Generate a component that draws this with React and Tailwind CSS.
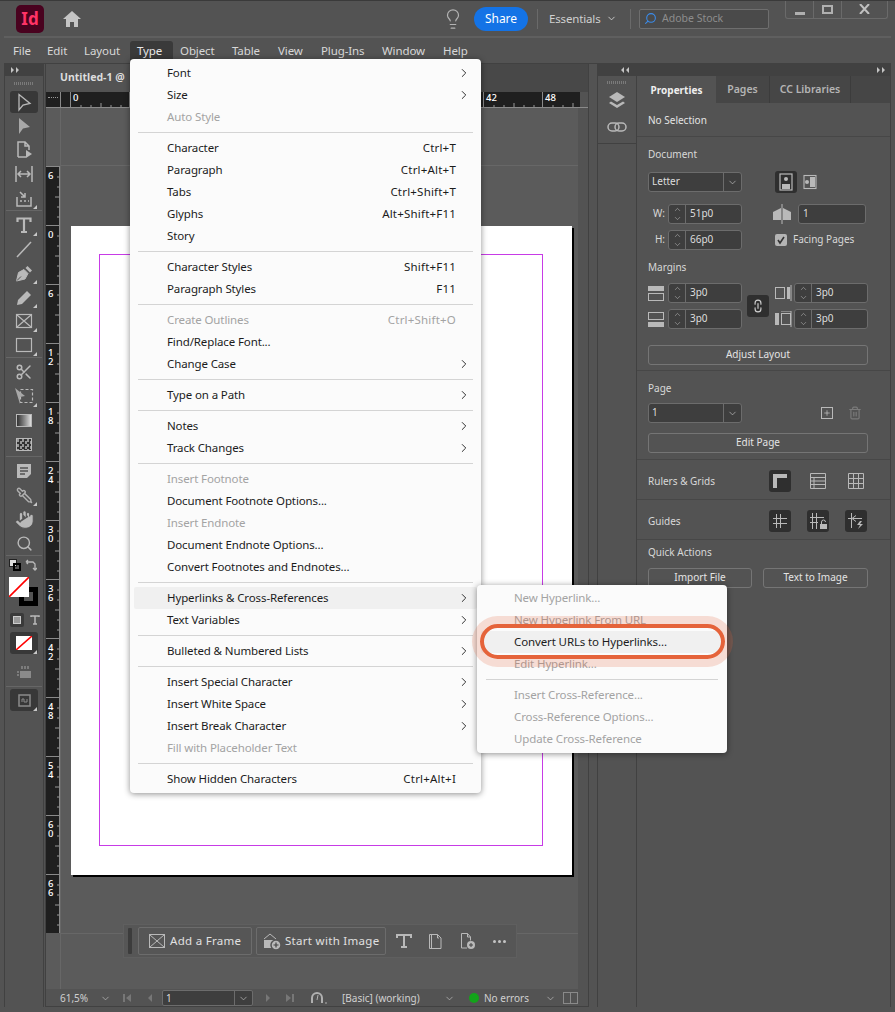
import { ChevronDown, ChevronRight, ChevronUp, Scissors, Pipette, Hand, Search, Lightbulb, Plus, Trash2, Link2 } from 'lucide-react';

const typeMenu = [
  [{ t: 'Font', a: 1 }, { t: 'Size', a: 1 }, { t: 'Auto Style', d: 1 }],
  [{ t: 'Character', s: 'Ctrl+T' }, { t: 'Paragraph', s: 'Ctrl+Alt+T' }, { t: 'Tabs', s: 'Ctrl+Shift+T' }, { t: 'Glyphs', s: 'Alt+Shift+F11' }, { t: 'Story' }],
  [{ t: 'Character Styles', s: 'Shift+F11' }, { t: 'Paragraph Styles', s: 'F11' }],
  [{ t: 'Create Outlines', s: 'Ctrl+Shift+O', d: 1 }, { t: 'Find/Replace Font...' }, { t: 'Change Case', a: 1 }],
  [{ t: 'Type on a Path', a: 1 }],
  [{ t: 'Notes', a: 1 }, { t: 'Track Changes', a: 1 }],
  [{ t: 'Insert Footnote', d: 1 }, { t: 'Document Footnote Options...' }, { t: 'Insert Endnote', d: 1 }, { t: 'Document Endnote Options...' }, { t: 'Convert Footnotes and Endnotes...' }],
  [{ t: 'Hyperlinks & Cross-References', a: 1, h: 1 }, { t: 'Text Variables', a: 1 }],
  [{ t: 'Bulleted & Numbered Lists', a: 1 }],
  [{ t: 'Insert Special Character', a: 1 }, { t: 'Insert White Space', a: 1 }, { t: 'Insert Break Character', a: 1 }, { t: 'Fill with Placeholder Text', d: 1 }],
  [{ t: 'Show Hidden Characters', s: 'Ctrl+Alt+I' }],
];

const linkMenu = [
  [{ t: 'New Hyperlink...', d: 1 }, { t: 'New Hyperlink From URL', d: 1 }, { t: 'Convert URLs to Hyperlinks...', h: 1 }, { t: 'Edit Hyperlink...', d: 1 }],
  [{ t: 'Insert Cross-Reference...', d: 1 }, { t: 'Cross-Reference Options...', d: 1 }, { t: 'Update Cross-Reference', d: 1 }],
];

const menuBar = [
  ['File', 'w-[34px]'], ['Edit', 'w-[37px]'], ['Layout', 'w-[53px]'], ['Type', 'w-[43px]'], ['Object', 'w-[52px]'],
  ['Table', 'w-[46px]'], ['View', 'w-[43px]'], ['Plug-Ins', 'w-[61px]'], ['Window', 'w-[61px]'], ['Help', 'w-[40px]'],
];

const rulerLabels = ['6', '0', '6', '12', '18', '24', '30', '36', '42', '48', '54', '60', '66'];
const topLabels = ['0', '6', '12', '18', '24', '30', '36', '42', '48'];

function MenuRow({ item }) {
  return (
    <div className={`mx-[4px] h-[22px] pl-[33px] flex items-center justify-between rounded-[2px] ${item.a ? 'pr-[6px]' : 'pr-[21px]'} ${item.h ? 'bg-[#f0f0f0]' : ''} ${item.d ? 'text-[#a3a3a3]' : 'text-[#1c1c1c]'}`}>
      <span>{item.t}</span>
      {item.s && <span className="tracking-[0.2px]">{item.s}</span>}
      {item.a && <ChevronRight size={14} strokeWidth={1.6} className="text-[#222]" />}
    </div>
  );
}

function Tick({ vertical }) {
  return vertical ? (
    <svg width="5" height="58" className="ml-auto">
      <path d="M3 10h2M3 20h2M1 30h4M3 40h2M3 50h2" stroke="#9a9a9a" />
    </svg>
  ) : (
    <svg width="58" height="5" className="absolute bottom-0 left-0">
      <path d="M10 3v2M20 3v2M30 1v4M40 3v2M50 3v2" stroke="#9a9a9a" />
    </svg>
  );
}

function Tool({ children, active, corner, h = 'h-[24px]' }) {
  return (
    <div className={`${h} flex items-center justify-center`}>
      <div className={`relative w-[28px] h-[22px] flex items-center justify-center rounded-[3px] ${active ? 'bg-[#383838]' : ''}`}>
        {children}
        {corner && <span className="absolute right-[1px] bottom-[0px] w-0 h-0 border-l-[4px] border-l-transparent border-b-[4px] border-b-[#c8c8c8]" />}
      </div>
    </div>
  );
}

function Ic({ children, w = 20, h = 20, vb }) {
  return (
    <svg width={w} height={h} viewBox={vb || `0 0 ${w} ${h}`} fill="none" stroke="#b9b9b9" strokeWidth="1.5">
      {children}
    </svg>
  );
}

function Sep() {
  return <div className="h-px bg-[#666] mx-[1px]" />;
}

function Toolbar() {
  return (
    <div className="w-[40px] border-x border-[#414141] flex flex-col shrink-0">
      <div className="h-[12px] bg-[#414141] text-[#c4c4c4] flex items-center pl-[5px]">
        <svg width="10" height="6"><path d="M1 0l3 3-3 3zM6 0l3 3-3 3z" fill="#c4c4c4" /></svg>
      </div>
      <div className="h-[14px] flex items-center justify-center">
        <div className="w-[20px] h-[3px] bg-[repeating-linear-gradient(90deg,#7a7a7a_0_1px,transparent_1px_2px)]" />
      </div>
      <Tool active><Ic vb="0 0 20 20"><path d="M5 2.500l11 9-7 1.500-4 5z" strokeWidth="1.3" /></Ic></Tool>
      <Tool><Ic><path d="M5 2l11 9-7 1.500-4 5.500z" fill="#a8a8a8" stroke="none" /></Ic></Tool>
      <Tool><Ic><path d="M4 17V2h7l4 4v4M4 17h8M11 2v4h4" /><path d="M12 10l6 4-6 4z" fill="#b9b9b9" stroke="none" /></Ic></Tool>
      <Tool><Ic w={22}><path d="M3 2v16M19 2v16" /><path d="M6 10h10M8 7l-3 3 3 3M14 7l3 3-3 3" /></Ic></Tool>
      <Tool corner><Ic><path d="M3 9v9h14V9" /><path d="M6 4l5 5M11 5v4H7" /><path d="M6 13h2M10 13h2M14 13h1" /></Ic></Tool>
      <div className="h-[3px]"><Sep /></div>
      <Tool corner><Ic><path d="M3.500 7V3.500h13V7M10 3.500V17M7 17h6" strokeWidth="2.200" /></Ic></Tool>
      <Tool><Ic><path d="M3 18L17 3" /></Ic></Tool>
      <Tool corner><Ic><path d="M2.500 18l2-8.500L10 6.500l4 4-3 5.500z" fill="#b9b9b9" stroke="#b9b9b9" strokeWidth="1" /><path d="M11.500 5l2-2 4.500 4.500-2 2z" fill="#b9b9b9" stroke="none" /><path d="M3 17.500l4-4" stroke="#535353" strokeWidth="1" /></Ic></Tool>
      <Tool corner><Ic><path d="M3 18l1-5L13 4l4 4-9 9z" fill="#b9b9b9" stroke="none" /></Ic></Tool>
      <Tool corner><Ic><rect x="2.500" y="3.500" width="15" height="13" strokeWidth="1.200" /><path d="M3 4l14 12M17 4L3 16" strokeWidth="1.200" /></Ic></Tool>
      <Tool corner><Ic><rect x="2.500" y="3.500" width="15" height="13" strokeWidth="1.200" /></Ic></Tool>
      <div className="h-[3px]"><Sep /></div>
      <Tool><Scissors size={18} stroke="#b9b9b9" /></Tool>
      <Tool corner><Ic><rect x="6.500" y="3.500" width="12" height="13" strokeDasharray="3 2" strokeWidth="1.200" /><path d="M1 2l10 8-5 1 0 7z" fill="#a8a8a8" stroke="none" /></Ic></Tool>
      <Tool><div className="w-[16px] h-[13px] border border-[#b9b9b9] bg-gradient-to-r from-[#333] to-[#ddd]" /></Tool>
      <Tool><div className="w-[16px] h-[13px] border border-[#b9b9b9] bg-[conic-gradient(#333_25%,#999_0_50%,#333_0_75%,#999_0)] bg-[length:5px_5px]" /></Tool>
      <div className="h-[3px]"><Sep /></div>
      <Tool><Ic><path d="M3 3h14v10l-4 4H3z" fill="#b9b9b9" stroke="none" /><path d="M6 7h8M6 10h8M6 13h5" stroke="#535353" /></Ic></Tool>
      <Tool corner><Pipette size={17} stroke="#b0b0b0" className="-scale-x-100" /></Tool>
      <Tool><Hand size={21} fill="#b9b9b9" stroke="#535353" strokeWidth={1.2} /></Tool>
      <Tool><Search size={17} stroke="#b9b9b9" /></Tool>
      <div className="h-[3px]"><Sep /></div>
      <div className="h-[14px] flex items-center pl-[4px] gap-[4px]">
        <div className="relative w-[12px] h-[12px]">
          <div className="w-[8px] h-[8px] bg-[#ddd] border border-[#222]" />
          <div className="absolute right-0 bottom-0 w-[8px] h-[8px] border-2 border-black" />
        </div>
        <Ic w={12} h={12}><path d="M2 3h6l2 2v5M1 3l2-2M1 3l2 2M8 9l2 2 2-2" strokeWidth="1.300" /></Ic>
      </div>
      <div className="relative mt-[5px] h-[30px]">
        <div className="absolute left-[14px] top-[10px] w-[19px] h-[19px] bg-black flex items-center justify-center"><div className="w-[9px] h-[9px] bg-[#535353]" /></div>
        <div className="absolute left-[4px] top-0 w-[20px] h-[20px] bg-white overflow-hidden">
          <svg width="20" height="20"><path d="M0 20L20 0" stroke="#f00" strokeWidth="1.600" /></svg>
        </div>
      </div>
      <div className="mt-[2px] mb-[1px] h-[22px] flex items-center pl-[5px] gap-[6px]">
        <div className="w-[14px] h-[14px] rounded-[2px] bg-[#3a3a3a] flex items-center justify-center"><div className="w-[8px] h-[8px] bg-[#999] border border-[#ccc]" /></div>
        <Ic w={10} h={10}><path d="M1 2V1h8v1M5 1v8M3 9h4" strokeWidth="1.500" /></Ic>
      </div>
      <Tool active corner h="h-[22px]">
        <div className="w-[16px] h-[14px] bg-white overflow-hidden"><svg width="16" height="14"><path d="M0 14L16 0" stroke="#f00" strokeWidth="1.600" /></svg></div>
      </Tool>
      <div className="h-[32px] pt-[4px] flex items-center justify-center">
        <Ic w={16} h={14}><path d="M4 6h11v7H4z" fill="#8a8a8a" stroke="none" /><path d="M1 7h2M1 10h2M6 1v3M9 1v3M12 1v3" stroke="#8a8a8a" /></Ic>
      </div>
      <div className="h-[3px]"><Sep /></div>
      <Tool active corner h="h-[22px]">
        <Ic w={13} h={13}><rect x="1" y="1" width="11" height="11" stroke="#8a8a8a" /><path d="M4 8V5h2v3h3V5" stroke="#8a8a8a" strokeWidth="1" /></Ic>
      </Tool>
    </div>
  );
}

function MiniChevron() {
  return <ChevronDown size={11} strokeWidth={1.500} className="text-[#c0c0c0] shrink-0" />;
}

function Select({ value, w }) {
  return (
    <div className={`${w} h-[20px] bg-[#3e3e3e] border border-[#6c6c6c] rounded-[3px] flex items-center`}>
      <span className="flex-1 pl-[3px] pb-[2px] text-[#ddd]">{value}</span>
      <div className="w-[18px] h-full border-l border-[#6c6c6c] flex items-center justify-center"><MiniChevron /></div>
    </div>
  );
}

function Stepper({ value, w = 'w-[74px]' }) {
  return (
    <div className={`${w} h-[20px] bg-[#3e3e3e] border border-[#6c6c6c] rounded-[3px] flex items-center`}>
      <div className="w-[17px] h-full border-r border-[#6c6c6c] flex flex-col items-center justify-center">
        <ChevronUp size={9} strokeWidth={1.400} className="text-[#c0c0c0]" />
        <ChevronDown size={9} strokeWidth={1.400} className="text-[#c0c0c0]" />
      </div>
      <span className="pl-[4px] pb-[2px] text-[#ddd]">{value}</span>
    </div>
  );
}

function PanelButton({ children, w = 'w-[220px]', h = 'h-[20px]' }) {
  return <div className={`${w} ${h} border border-[#757575] rounded-[3px] pb-[2px] flex items-center justify-center text-[#e4e4e4]`}>{children}</div>;
}

function IconBox({ active, children }) {
  return <div className={`w-[22px] h-[22px] rounded-[3px] flex items-center justify-center ${active ? 'bg-[#2f2f2f]' : ''}`}>{children}</div>;
}

function Section({ h, children }) {
  return <div className={`${h} border-b border-[#474747] pl-[11px]`}>{children}</div>;
}

function MarginIcon({ side }) {
  return (
    <svg width="17" height="17" fill="none">
      {side === 'top' && <><rect x="0" y="1" width="16" height="5" fill="#b9b9b9" /><rect x="0.500" y="8.500" width="15" height="7" stroke="#b9b9b9" /></>}
      {side === 'bottom' && <><rect x="0.500" y="1.500" width="15" height="7" stroke="#b9b9b9" /><rect x="0" y="11" width="16" height="5" fill="#b9b9b9" /></>}
      {side === 'right' && <><rect x="0.500" y="2.500" width="9" height="11" stroke="#b9b9b9" /><rect x="12" y="2" width="3" height="12" fill="#b9b9b9" /><path d="M16 0v16" stroke="#b9b9b9" /></>}
      {side === 'left' && <><rect x="0" y="2" width="4" height="12" fill="#b9b9b9" /><rect x="6.500" y="2.500" width="9" height="11" stroke="#b9b9b9" /><path d="M6 0h10v16" stroke="#b9b9b9" /></>}
    </svg>
  );
}

function Panel() {
  return (
    <div className="w-[255px] flex flex-col border-x border-[#414141] text-[10px]">
      <div className="h-[27px] flex bg-[#464646] text-[10.500px]">
        <div className="w-[79px] bg-[#535353] flex items-center justify-center font-bold text-[10px] text-[#eee] -mb-px pt-[1px]">Properties</div>
        <div className="w-[54px] border-r border-[#3c3c3c] flex items-center justify-center text-[#b4b4b4] font-semibold pt-[1px]">Pages</div>
        <div className="w-[81px] border-r border-[#3c3c3c] flex items-center justify-center text-[#b4b4b4] font-semibold pt-[1px]">CC Libraries</div>
      </div>
      <Section h="h-[34px]"><div className="h-full pt-[1px] flex items-center text-[#e4e4e4]">No Selection</div></Section>
      <Section h="h-[234px]">
        <div className="pt-[9px] h-[25px] flex items-center text-[#d8d8d8]">Document</div>
        <div className="mt-[9px] flex items-center">
          <Select value="Letter" w="w-[94px]" />
          <div className="ml-[33px]"><IconBox active><Ic w={16} h={18}><rect x="2" y="1" width="12" height="16" strokeWidth="1.200" /><circle cx="8" cy="6" r="2" fill="#b9b9b9" stroke="none" /><path d="M4 16v-5h8v5z" fill="#b9b9b9" stroke="none" /></Ic></IconBox></div>
          <div className="ml-[6px]"><Ic w={14} h={16}><rect x="1" y="1.500" width="12" height="13" strokeWidth="1.100" /><circle cx="4" cy="8" r="2" fill="#b9b9b9" stroke="none" /><path d="M7 3h5v10H7z" fill="#b9b9b9" stroke="none" /></Ic></div>
        </div>
        <div className="mt-[11px] flex items-center">
          <span className="w-[20px] pb-[2px] text-right pr-[3px] text-[#d8d8d8]">W:</span>
          <Stepper value="51p0" />
          <div className="ml-[31px] mr-[7px]"><Ic w={18} h={20}><path d="M9 0v20" strokeWidth="1" /><path d="M0 8l8-4v12H0zM18 8l-8-4v12h8z" fill="#b9b9b9" stroke="none" /></Ic></div>
          <div className="w-[68px] h-[20px] bg-[#3e3e3e] border border-[#6c6c6c] rounded-[3px] flex items-center pl-[4px] pb-[2px] text-[#ddd]">1</div>
        </div>
        <div className="mt-[6px] flex items-center">
          <span className="w-[20px] pb-[2px] text-right pr-[3px] text-[#d8d8d8]">H:</span>
          <Stepper value="66p0" />
          <div className="ml-[33px] w-[12px] h-[12px] bg-[#b4b4b4] rounded-[2px] flex items-center justify-center">
            <svg width="10" height="10" fill="none"><path d="M2 5l2 3 4-6" stroke="#333" strokeWidth="1.600" /></svg>
          </div>
          <span className="ml-[6px] pb-[2px] text-[#d8d8d8]">Facing Pages</span>
        </div>
        <div className="mt-[10px] h-[14px] flex items-center text-[#d8d8d8]">Margins</div>
        <div className="mt-[9px] flex">
          <div className="flex flex-col gap-[6px]">
            <div className="flex items-center gap-[3px]"><MarginIcon side="top" /><Stepper value="3p0" /></div>
            <div className="flex items-center gap-[3px]"><MarginIcon side="bottom" /><Stepper value="3p0" /></div>
          </div>
          <div className="mx-[5px] self-center"><IconBox active><Link2 size={14} stroke="#cfcfcf" className="rotate-90" /></IconBox></div>
          <div className="ml-[1px] flex flex-col gap-[6px]">
            <div className="flex items-center gap-[2px]"><MarginIcon side="right" /><Stepper value="3p0" /></div>
            <div className="flex items-center gap-[2px]"><MarginIcon side="left" /><Stepper value="3p0" /></div>
          </div>
        </div>
        <div className="mt-[16px]"><PanelButton>Adjust Layout</PanelButton></div>
      </Section>
      <Section h="h-[89px]">
        <div className="pt-[9px] h-[25px] flex items-center text-[#d8d8d8]">Page</div>
        <div className="mt-[7px] flex items-center">
          <Select value="1" w="w-[94px]" />
          <div className="ml-[79px] w-[12px] h-[12px] border border-[#b9b9b9] flex items-center justify-center"><Plus size={8} strokeWidth={2} stroke="#ccc" /></div>
          <div className="ml-[15px]"><Trash2 size={14} stroke="#7b7b7b" /></div>
        </div>
        <div className="mt-[10px]"><PanelButton>Edit Page</PanelButton></div>
      </Section>
      <Section h="h-[40px]">
        <div className="h-full pt-[2px] flex items-center">
          <span className="w-[121px] pt-[1px] text-[#d8d8d8]">Rulers &amp; Grids</span>
          <div className="flex gap-[16px]">
            <IconBox active><Ic w={16} h={16}><path d="M3 15V3h12" strokeWidth="4" /></Ic></IconBox>
            <IconBox><Ic w={16} h={16}><path d="M.5.5h15v15H.5zM.5 4.500h15M.5 8h15M.5 11.500h15M4 4.500v11" strokeWidth="1" /></Ic></IconBox>
            <IconBox><Ic w={16} h={16}><path d="M.5.5h15v15H.5zM.5 5.500h15M.5 10.500h15M5.500.5v15M10.500.5v15" strokeWidth="1" /></Ic></IconBox>
          </div>
        </div>
      </Section>
      <Section h="h-[40px]">
        <div className="h-full pt-[2px] flex items-center">
          <span className="w-[121px] pt-[1px] text-[#d8d8d8]">Guides</span>
          <div className="flex gap-[16px]">
            <IconBox active><Ic w={16} h={16}><path d="M4.500 1v14M8.500 1v14M1 5.500h14M1 10.500h14" strokeWidth="1" /></Ic></IconBox>
            <IconBox active><Ic w={18} h={18}><path d="M3.500 1v16M7.500 1v16M1 5.500h14M1 10.500h8" strokeWidth="1" /><rect x="11" y="12" width="7" height="5" fill="#b9b9b9" stroke="none" /><path d="M12.500 12v-2a2 2 0 014 0" strokeWidth="1" /></Ic></IconBox>
            <IconBox active><Ic w={18} h={18}><path d="M4.500 1v15M1 6.500h4M6 6.500h9M5 6.500l4-3M5 6.500l4 3" strokeWidth="1" /><path d="M13 9l-3 4h3l-2 4 5-5h-3l2-3z" fill="#b9b9b9" stroke="none" /></Ic></IconBox>
          </div>
        </div>
      </Section>
      <div className="pl-[11px]">
        <div className="mt-[5px] h-[14px] flex items-center text-[#d8d8d8]">Quick Actions</div>
        <div className="mt-[9px] flex gap-[11px]">
          <PanelButton w="w-[104px]">Import File</PanelButton>
          <PanelButton w="w-[105px]">Text to Image</PanelButton>
        </div>
      </div>
    </div>
  );
}

function Dock() {
  return (
    <div className="w-[39px] flex flex-col shrink-0 border-l border-[#414141]">
      <div className="h-[13px] flex items-center justify-center">
        <div className="w-[20px] h-[3px] bg-[repeating-linear-gradient(90deg,#7a7a7a_0_1px,transparent_1px_2px)]" />
      </div>
      <div className="h-[22px] flex items-center justify-center">
        <Ic w={18} h={18}><path d="M9 1l8 5-8 5-8-5z" fill="#b9b9b9" stroke="none" /><path d="M3 10.500L9 14l6-3.500 2 1.500-8 5-8-5z" fill="#b9b9b9" stroke="none" /></Ic>
      </div>
      <div className="h-[33px] border-b border-[#414141] flex items-center justify-center">
        <Ic w={20} h={12}><rect x="1" y="2" width="11" height="8" rx="4" /><rect x="8" y="2" width="11" height="8" rx="4" /></Ic>
      </div>
    </div>
  );
}

function Canvas() {
  return (
    <div className="relative flex-1 bg-[#5b5b5b] min-w-0">
      <div className="h-[58px] border-b border-[#676767]" />
      <div className="ml-[10px] mt-[60px] w-[501px] h-[649px] bg-white shadow-[2px_2px_0_#000] pt-[28px] pl-[28px]">
        <div className="w-[444px] h-[592px] border border-[#c73be6]" />
      </div>
      <div className="mt-[58px] border-t border-[#676767]" />
      <div className="absolute left-[62px] top-[816px] w-[394px] h-[34px] bg-[#565656] border border-[#5f5f5f] flex items-center text-[#e0e0e0] text-[11.500px] tracking-[.3px]">
        <div className="ml-[4px] w-[4px] h-[26px] bg-[#3c3c3c] rounded-[1px]" />
        <div className="ml-[6px] w-[114px] h-[28px] border border-[#6c6c6c] rounded-[2px] flex items-center pl-[10px] gap-[5px]">
          <Ic w={16} h={14}><rect x=".5" y=".5" width="15" height="13" strokeWidth="1" /><path d="M1 1l14 12M15 1L1 13" strokeWidth="1" /></Ic>
          <span>Add a Frame</span>
        </div>
        <div className="ml-[4px] w-[130px] h-[28px] border border-[#6c6c6c] rounded-[2px] flex items-center pl-[6px] gap-[4px]">
          <Ic w={18} h={17}><path d="M1 6l6-5 6 5" strokeWidth="1" /><rect x="1" y="7" width="11" height="8" fill="#b9b9b9" stroke="none" /><circle cx="13" cy="12" r="5" fill="#b9b9b9" stroke="#565656" /><path d="M13 9.500v5M10.500 12h5" stroke="#444" strokeWidth="1.200" /></Ic>
          <span className="whitespace-nowrap">Start with Image</span>
        </div>
        <div className="ml-[10px]"><Ic w={16} h={14}><path d="M1 4V1h14v3M8 1v12M5 13h6" strokeWidth="2" /></Ic></div>
        <div className="ml-[16px]"><Ic w={14} h={15}><path d="M1.500.5h8l3.500 3.500v10.500h-11.500zM3.500.5v14M11 4H9.500V.5" strokeWidth="1" /></Ic></div>
        <div className="ml-[18px]"><Ic w={16} h={17}><path d="M7 15H1.500V.5h6l3 3.500v3.500M7.500.500v3.500h3" strokeWidth="1" /><circle cx="11" cy="12" r="4" fill="#b9b9b9" stroke="none" /><path d="M11 10v4M9 12h4" stroke="#444" strokeWidth="1" /></Ic></div>
        <div className="ml-[17px] flex gap-[2px]">
          <span className="w-[3px] h-[3px] rounded-full bg-[#c4c4c4]" /><span className="w-[3px] h-[3px] rounded-full bg-[#c4c4c4]" /><span className="w-[3px] h-[3px] rounded-full bg-[#c4c4c4]" />
        </div>
      </div>
    </div>
  );
}

function Document() {
  return (
    <div className="w-[544px] ml-[1px] flex flex-col shrink-0 border-x border-[#414141] border-b">
      <div className="h-[28px] flex bg-[#484848]">
        <div className="w-[84px] bg-[#535353] flex items-center pl-[14px] font-bold text-[#ddd] whitespace-nowrap text-[10.500px]">Untitled-1 @</div>
      </div>
      <div className="h-[16px] flex border-b border-[#8a8a8a]">
        <div className="w-[15px] border-r border-[#8a8a8a] bg-[#1f1f1f] flex items-center justify-center">
          <div className="w-[10px] h-[8px] border-t border-dotted border-[#999] mt-[2px]" />
        </div>
        <div className="w-[519px] bg-[#1f1f1f] overflow-hidden flex pl-[9px]">
          {topLabels.map((l, i) => (
            <div key={i} className="w-[59px] shrink-0 h-full border-l border-[#8a8a8a] relative">
              <span className="absolute left-[2px] top-[-1px] text-[9.500px] font-medium text-white">{l}</span>
              <Tick />
            </div>
          ))}
        </div>
        <div className="flex-1 bg-[#535353]" />
      </div>
      <div className="flex-1 flex min-h-0">
        <div className="w-[15px] shrink-0 border-r border-[#676767] bg-[#5b5b5b] flex flex-col">
          <div className="h-[58px]" />
          <div className="h-[767px] bg-[#1f1f1f] border-r border-[#8a8a8a]">
            {rulerLabels.map((l, i) => (
              <div key={i} className="h-[59px] border-t border-[#8a8a8a] flex">
                <span className="pl-[2px] pt-[4px] w-[8px] text-[9.500px] leading-[9px] font-medium text-white break-all">{l}</span>
                <Tick vertical />
              </div>
            ))}
          </div>
        </div>
        <Canvas />
        <div className="w-[10px] shrink-0 bg-[#535353]" />
      </div>
      <div className="h-[17px] pt-[1px] flex items-center text-[#d0d0d0] text-[10px]">
        <span className="ml-[14px] w-[40px]">61,5%</span>
        <MiniChevron />
        <svg className="ml-[11px]" width="10" height="10"><path d="M1 1h2v8H1zM9 1v8L4 5z" fill="#777" /></svg>
        <svg className="ml-[15px]" width="6" height="10"><path d="M5 1v8L1 5z" fill="#777" /></svg>
        <div className="ml-[9px] w-[91px] h-[16px] bg-[#3e3e3e] border border-[#6c6c6c] rounded-[2px] flex items-center">
          <span className="flex-1 pl-[3px] text-[#ddd]">1</span>
          <div className="w-[18px] h-full border-l border-[#6c6c6c] flex items-center justify-center"><MiniChevron /></div>
        </div>
        <svg className="ml-[12px]" width="6" height="10"><path d="M1 1v8l4-4z" fill="#777" /></svg>
        <svg className="ml-[14px]" width="10" height="10"><path d="M1 1v8l5-4zM7 1h2v8H7z" fill="#777" /></svg>
        <svg className="ml-[15px]" width="18" height="14" fill="none"><path d="M2 12V7a5 5 0 0110 0v5" stroke="#b0b0b0" strokeWidth="2" /><path d="M7 9l1-5" stroke="#b0b0b0" /><path d="M15 12h2" stroke="#b0b0b0" /></svg>
        <span className="ml-[14px] w-[102px] whitespace-nowrap">[Basic] (working)</span>
        <MiniChevron />
        <span className="ml-[14px] w-[10px] h-[10px] rounded-full bg-[#13a31a]" />
        <span className="ml-[5px] w-[61px]">No errors</span>
        <MiniChevron />
        <div className="ml-[7px] w-[15px] h-[12px] border border-[#8a8a8a] flex"><div className="w-1/2 border-r border-[#8a8a8a]" /></div>
      </div>
    </div>
  );
}

export default function App() {
  return (
    <div className="relative w-[895px] h-[1012px] bg-[#535353] overflow-hidden flex flex-col text-[10.500px] font-['Noto_Sans',sans-serif] border-t border-[#3a3a3a]">
      {/* title bar */}
      <div className="h-[37px] mx-[4px] pl-[12px] flex items-center border-b-2 border-[#5f5f5f] shrink-0">
        <div className="w-[28px] h-[28px] rounded-[5px] bg-[#49021f] text-[#ff3366] font-bold text-[17px] flex items-center justify-center">Id</div>
        <svg className="ml-[19px]" width="18" height="16"><path d="M9 0L0 8h3v8h4v-5h4v5h4V8h3z" fill="#c4c4c4" /></svg>
        <Lightbulb className="ml-[361px]" size={22} stroke="#b4b4b4" strokeWidth={1.300} />
        <div className="ml-[10px] w-[54px] h-[24px] rounded-full bg-[#1473e6] text-white text-[12px] flex items-center justify-center">Share</div>
        <div className="ml-[9px] w-px h-[20px] bg-[#6a6a6a]" />
        <span className="ml-[11px] w-[51px] text-[11.500px] tracking-[-0.15px] text-[#d0d0d0] whitespace-nowrap">Essentials</span>
        <ChevronDown className="ml-[6px]" size={11} stroke="#d0d0d0" strokeWidth={2} />
        <div className="ml-[13px] w-px h-[20px] bg-[#6a6a6a]" />
        <div className="ml-[8px] w-[130px] h-[20px] border border-[#6e6e6e] rounded-[2px] bg-[#4a4a4a] flex items-center pl-[4px] gap-[5px] text-[#8d8d8d] text-[10.500px]">
          <Search size={13} stroke="#3a8bea" className="-scale-x-100 shrink-0" />
          <span>Adobe Stock</span>
        </div>
        <div className="ml-[16px] self-start w-[103px] h-[19px] border border-t-0 border-[#6a6a6a] rounded-b-[3px] flex -mt-px">
          <div className="w-[28px] border-r border-[#6a6a6a] flex items-end justify-center pb-[3px]"><div className="w-[10px] h-[3px] bg-[#b0b0b0]" /></div>
          <div className="w-[28px] border-r border-[#6a6a6a] flex items-center justify-center"><div className="w-[11px] h-[9px] border-2 border-[#b0b0b0]" /></div>
          <div className="flex-1 flex items-center justify-center">
            <svg width="11" height="10"><path d="M1 0l9 10M10 0L1 10" stroke="#c0c0c0" strokeWidth="2" /></svg>
          </div>
        </div>
      </div>
      {/* menu bar */}
      <div className="h-[25px] shrink-0 pl-[6px] flex items-center text-[11.500px] tracking-[-0.1px] text-[#d8d8d8]">
        {menuBar.map(([name, w]) => (
          <div key={name} className={`${w} h-[19px] pl-[7px] flex items-center rounded-t-[3px] ${name === 'Type' ? 'bg-[#3a3a3a] text-[#e8e8e8]' : ''}`}>{name}</div>
        ))}
      </div>
      {/* workspace */}
      <div className="h-[944px] mx-[4px] flex flex-col min-h-0 border-t border-[#414141]">
        <div className="flex flex-1 min-h-0">
          <Toolbar />
          <div className="flex-1 flex min-h-0">
            <Document />
            <div className="flex-1 flex flex-col ml-[8px]">
              <div className="h-[12px] bg-[#414141] flex items-center justify-between pl-[23px] pr-[5px]">
                <svg width="10" height="6"><path d="M4 0L1 3l3 3zM9 0L6 3l3 3z" fill="#c4c4c4" /></svg>
                <svg width="10" height="6"><path d="M1 0l3 3-3 3zM6 0l3 3-3 3z" fill="#c4c4c4" /></svg>
              </div>
              <div className="flex-1 flex min-h-0">
                <Dock />
                <Panel />
              </div>
            </div>
          </div>
        </div>
      </div>
      {/* Type menu */}
      <div className="absolute left-[130px] top-[58px] w-[351px] h-[734px] bg-[#fbfbfb] rounded-[4px] shadow-[0_1px_6px_rgba(0,0,0,0.45)] py-[3px] text-[11.500px] tracking-[-0.12px]">
        {typeMenu.map((group, i) => (
          <div key={i}>
            {i > 0 && <div className="h-[9px] flex items-center px-[8px]"><div className="w-full h-px bg-[#d4d4d4]" /></div>}
            {group.map(item => <MenuRow key={item.t} item={item} />)}
          </div>
        ))}
      </div>
      {/* Hyperlinks submenu */}
      <div className="absolute left-[477px] top-[584px] w-[250px] h-[168px] bg-[#fbfbfb] rounded-[4px] shadow-[0_1px_6px_rgba(0,0,0,0.45)] py-[2px] text-[11.500px] tracking-[-0.12px]">
        {linkMenu.map((group, i) => (
          <div key={i}>
            {i > 0 && <div className="h-[9px] flex items-center px-[9px]"><div className="w-full h-px bg-[#d4d4d4]" /></div>}
            {group.map(item => <MenuRow key={item.t} item={item} />)}
          </div>
        ))}
      </div>
      {/* callout */}
      <div className="absolute left-[480px] top-[623px] w-[245px] h-[35px] rounded-full border-[4px] border-[#e5633a] shadow-[0_0_0_8px_rgba(229,99,58,0.2)]" />
    </div>
  );
}
